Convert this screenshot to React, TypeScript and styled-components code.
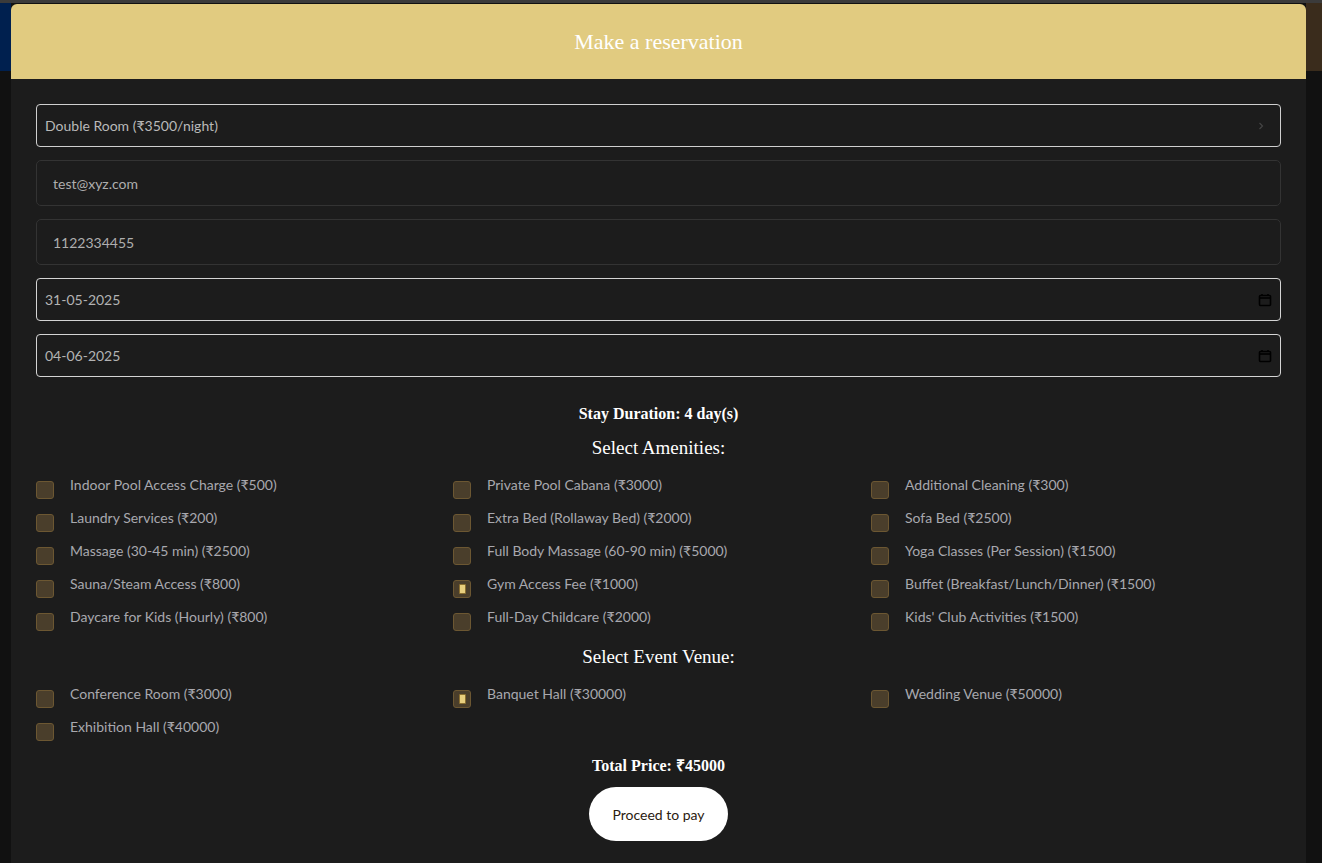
import styled, { createGlobalStyle } from 'styled-components';

const GlobalStyle = createGlobalStyle`
  html, body {
    margin: 0;
    padding: 0;
  }
  body {
    width: 1322px;
    height: 863px;
    overflow: hidden;
    background:
      linear-gradient(to bottom, #3b3b3b 0 3px, transparent 3px),
      linear-gradient(to right, #00204f 0 11px, transparent 11px, transparent 1306px, #3a2c1c 1306px) top left / 100% 71px no-repeat,
      #111111;
  }
`;

const amenities = [
  { label: 'Indoor Pool Access Charge (₹500)' },
  { label: 'Private Pool Cabana (₹3000)' },
  { label: 'Additional Cleaning (₹300)' },
  { label: 'Laundry Services (₹200)' },
  { label: 'Extra Bed (Rollaway Bed) (₹2000)' },
  { label: 'Sofa Bed (₹2500)' },
  { label: 'Massage (30-45 min) (₹2500)' },
  { label: 'Full Body Massage (60-90 min) (₹5000)' },
  { label: 'Yoga Classes (Per Session) (₹1500)' },
  { label: 'Sauna/Steam Access (₹800)' },
  { label: 'Gym Access Fee (₹1000)', checked: true },
  { label: 'Buffet (Breakfast/Lunch/Dinner) (₹1500)' },
  { label: 'Daycare for Kids (Hourly) (₹800)' },
  { label: 'Full-Day Childcare (₹2000)' },
  { label: "Kids' Club Activities (₹1500)" },
];

const venues = [
  { label: 'Conference Room (₹3000)' },
  { label: 'Banquet Hall (₹30000)', checked: true },
  { label: 'Wedding Venue (₹50000)' },
  { label: 'Exhibition Hall (₹40000)' },
];

function CheckRow({ label, checked }: { label: string; checked?: boolean }) {
  return (
    <Option>
      <Box>{checked && <Mark />}</Box>
      <span>{label}</span>
    </Option>
  );
}

export default function App() {
  return (
    <>
      <GlobalStyle />
      <Modal>
        <Header>Make a reservation</Header>
        <Body>
          <Fields>
            <SelectBox>
              Double Room (₹3500/night)
              <Chevron viewBox="0 0 10 10">
                <path d="M3.5 2 L6.5 5 L3.5 8" />
              </Chevron>
            </SelectBox>
            <TextField $indent>test@xyz.com</TextField>
            <TextField $indent>1122334455</TextField>
            <DateField>
              31-05-2025
              <CalendarIcon />
            </DateField>
            <DateField>
              04-06-2025
              <CalendarIcon />
            </DateField>
          </Fields>

          <Duration>Stay Duration: 4 day(s)</Duration>
          <SectionTitle>Select Amenities:</SectionTitle>
          <OptionGrid>
            {amenities.map((a, i) => (
              <CheckRow key={i} label={a.label} checked={a.checked} />
            ))}
          </OptionGrid>

          <SectionTitle $venue>Select Event Venue:</SectionTitle>
          <OptionGrid>
            {venues.map((v, i) => (
              <CheckRow key={i} label={v.label} checked={v.checked} />
            ))}
          </OptionGrid>

          <Total>Total Price: ₹45000</Total>
          <PayButton>Proceed to pay</PayButton>
        </Body>
      </Modal>
    </>
  );
}

function CalendarIcon() {
  return (
    <Calendar viewBox="0 0 14 14">
      <rect x="1.5" y="2.5" width="11" height="10" rx="1" />
      <path d="M1.5 5 H12.5" />
      <path d="M4 1 V3 M10 1 V3" />
    </Calendar>
  );
}

const Modal = styled.div`
  margin: 4px 0 0 11px;
  width: 1295px;
  height: 859px;
  background: #1c1c1c;
  border-radius: 6px 6px 0 0;
  overflow: hidden;
`;

const Header = styled.div`
  height: 75px;
  background: #e1cb80;
  display: flex;
  align-items: center;
  justify-content: center;
  color: #ffffff;
  font-family: 'Liberation Serif', 'DejaVu Serif', serif;
  font-size: 22px;
`;

const Body = styled.div`
  padding: 25px 25px 0;
  display: flex;
  flex-direction: column;
  align-items: stretch;
  font-family: Lato, 'Noto Sans', sans-serif;
`;

const Fields = styled.div`
  display: flex;
  flex-direction: column;
  gap: 13px;
`;

const SelectBox = styled.div`
  height: 43px;
  box-sizing: border-box;
  border: 1px solid #cfcfcf;
  border-radius: 4px;
  padding: 0 14px 0 8px;
  display: flex;
  align-items: center;
  justify-content: space-between;
  color: #b9b9b9;
  font-size: 14px;
`;

const Chevron = styled.svg`
  width: 10px;
  height: 10px;
  fill: none;
  stroke: #444;
  stroke-width: 1.2;
`;

const TextField = styled.div<{ $indent?: boolean }>`
  height: 46px;
  box-sizing: border-box;
  border: 1px solid #333333;
  border-radius: 5px;
  padding: 0 ${(p) => (p.$indent ? '16px' : '8px')};
  display: flex;
  align-items: center;
  color: #aeaeae;
  font-size: 14px;
`;

const DateField = styled.div`
  height: 43px;
  box-sizing: border-box;
  border: 1px solid #d4d4d4;
  border-radius: 4px;
  padding: 0 8px;
  display: flex;
  align-items: center;
  justify-content: space-between;
  color: #b3b3b3;
  font-size: 14px;
`;

const Calendar = styled.svg`
  width: 14px;
  height: 14px;
  fill: none;
  stroke: #000;
  stroke-width: 1.6;
`;

const Duration = styled.div`
  margin-top: 28px;
  text-align: center;
  color: #ffffff;
  font-family: 'Liberation Serif', serif;
  font-weight: bold;
  font-size: 16px;
  line-height: 18px;
`;

const SectionTitle = styled.div<{ $venue?: boolean }>`
  margin-top: ${(p) => (p.$venue ? '18px' : '14px')};
  margin-bottom: 15px;
  text-align: center;
  color: #ffffff;
  font-family: 'Liberation Serif', serif;
  font-size: 19px;
  line-height: 22px;
`;

const OptionGrid = styled.div`
  display: grid;
  grid-template-columns: 417px 418px 1fr;
  row-gap: 11px;
`;

const Option = styled.label`
  display: flex;
  align-items: flex-start;
  gap: 16px;
  color: #a8a8ae;
  font-size: 14px;
  line-height: 22px;
  height: 22px;
`;

const Box = styled.span`
  flex: none;
  width: 18px;
  height: 18px;
  margin-top: 7px;
  box-sizing: border-box;
  border: 1px solid #6c5732;
  border-radius: 3px;
  background: #4a3e2b;
  display: flex;
  align-items: center;
  justify-content: center;
`;

const Mark = styled.span`
  width: 7px;
  height: 10px;
  background: #e8cf7e;
  border: 1px solid #8a6f30;
  box-sizing: border-box;
  border-radius: 1px;
`;

const Total = styled.div`
  margin-top: 19px;
  text-align: center;
  color: #ffffff;
  font-family: 'Liberation Serif', serif;
  font-weight: bold;
  font-size: 16px;
  line-height: 18px;
`;

const PayButton = styled.button`
  align-self: center;
  margin-top: 12px;
  width: 139px;
  height: 54px;
  border: none;
  border-radius: 27px;
  background: #ffffff;
  color: #2a2010;
  font-family: Lato, 'Noto Sans', sans-serif;
  font-size: 14px;
  cursor: pointer;
`;
